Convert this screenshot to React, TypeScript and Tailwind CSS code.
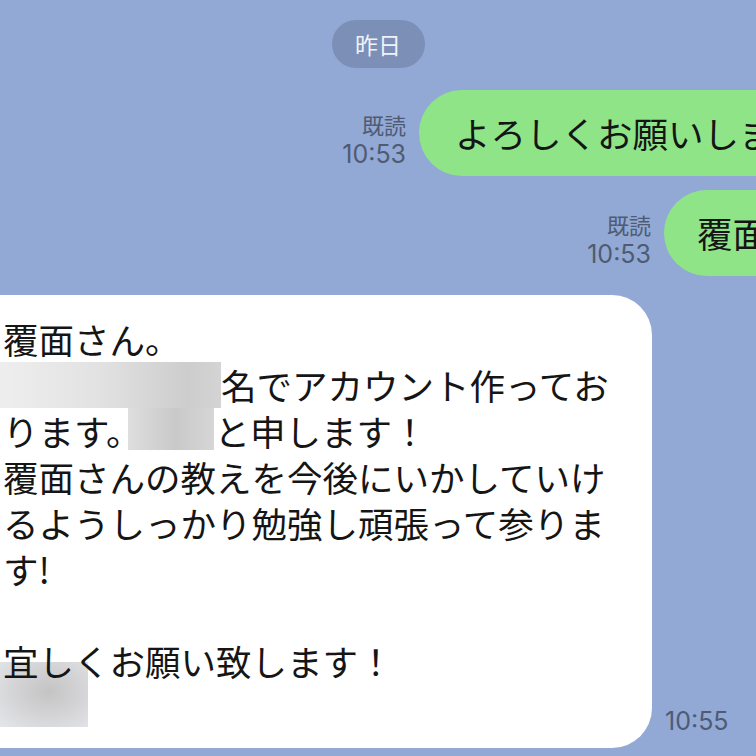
import React from 'react';

const jp = "font-['Noto_Sans_CJK_JP','Noto_Sans',sans-serif]";
const num = "font-['Inter','Liberation_Sans',sans-serif]";

function ReadMark({ time }: { time: string }) {
  return (
    <div className="flex flex-col items-end pb-[9px] text-[#4f5b72] leading-none">
      <span className={`${jp} text-[22px]`}>既読</span>
      <span className={`${num} text-[25px] mt-[7px]`}>{time}</span>
    </div>
  );
}

function SentBubble({ text }: { text: string }) {
  return (
    <div className={`${jp} shrink-0 bg-[#8fe488] rounded-[43px] h-[86px] flex items-center pl-[36px] pr-[40px] text-[35.5px] text-[#151515] whitespace-nowrap`}>
      {text}
    </div>
  );
}

export default function App() {
  return (
    <div className="w-[756px] h-[756px] overflow-hidden bg-[#92a9d6] relative">
      {/* 日付 */}
      <div className="pt-[20px] flex justify-center">
        <div className={`${jp} h-[48px] w-[93px] rounded-full bg-[#7c8fb6] text-[#eef2fa] text-[23px] flex items-center justify-center`}>
          昨日
        </div>
      </div>

      {/* 送信メッセージ（右にはみ出す） */}
      <div className="w-[900px] pr-[18px] flex flex-col">
        <div className="mt-[22px] flex items-end justify-end gap-[13px]">
          <ReadMark time="10:53" />
          <SentBubble text="よろしくお願いします。" />
        </div>
        <div className="mt-[14px] flex items-end justify-end gap-[13px]">
          <ReadMark time="10:53" />
          <div className={`${jp} shrink-0 w-[218px] bg-[#8fe488] rounded-[43px] h-[86px] flex items-center pl-[33px] text-[35.5px] text-[#151515] whitespace-nowrap`}>
            覆面さん
          </div>
        </div>
      </div>

      {/* 受信メッセージ */}
      <div className="mt-[19px] flex items-end gap-[13px]">
        <div className={`${jp} ml-[-40px] w-[692px] h-[453px] bg-white rounded-[40px] pl-[43px] pt-[21px] text-[35.5px] leading-[46px] text-[#151515] whitespace-nowrap`}>
          <div>覆面さん。</div>
          <div className="flex">
            <span className="ml-[-3px] w-[221px] h-[46px] bg-[linear-gradient(90deg,#eeeeee_0%,#e2e2e2_45%,#cdcdcd_85%,#d4d4d4_100%)]" />
            <span>名でアカウント作ってお</span>
          </div>
          <div className="flex">
            <span>ります。</span>
            <span className="ml-[-13px] w-[86px] h-[42px] bg-[linear-gradient(90deg,#dedede_0%,#c9c9c9_55%,#d6d6d6_100%)]" />
            <span>と申します！</span>
          </div>
          <div>覆面さんの教えを今後にいかしていけ</div>
          <div>るようしっかり勉強し頑張って参りま</div>
          <div>す!</div>
          <div>&nbsp;</div>
          <div>宜しくお願い致します！</div>
          <div className="ml-[-3px] mt-[-22px] w-[88px] h-[65px] bg-[radial-gradient(ellipse_at_55%_45%,#c4c4c4_0%,#d4d4d6_50%,#e4e6ea_100%)]" />
        </div>
        <span className={`${num} pb-[14px] text-[25px] leading-none text-[#4f5b72]`}>10:55</span>
      </div>
    </div>
  );
}
